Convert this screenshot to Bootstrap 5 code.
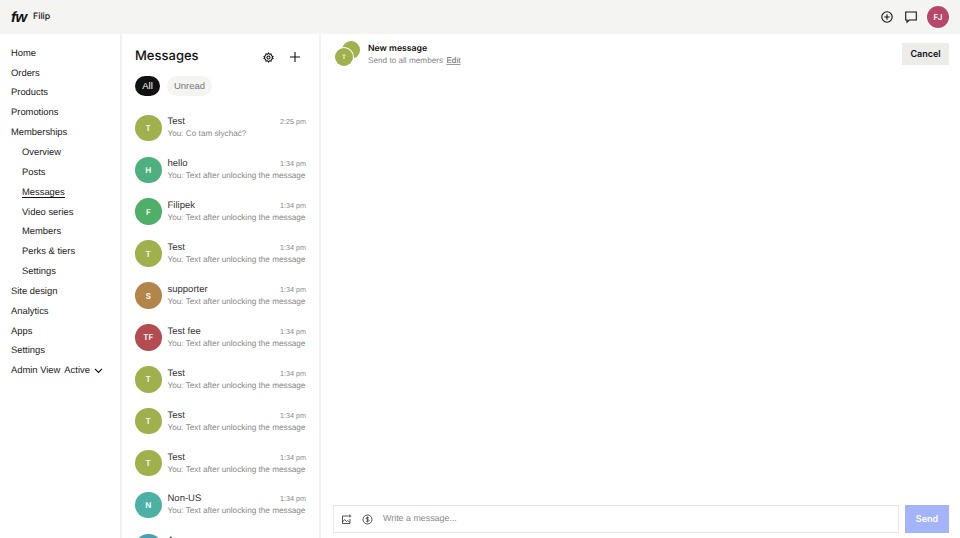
<!DOCTYPE html>
<html lang="en"><head><meta charset="utf-8">
<title>Messages</title>
<link href="https://cdn.jsdelivr.net/npm/bootstrap@5.3.0/dist/css/bootstrap.min.css" rel="stylesheet">
<style>
html,body{height:100%;overflow:hidden}
body{font-family:"Liberation Sans",Arial,sans-serif;color:#111;background:#fff;font-size:9.5px;text-rendering:geometricPrecision}
.shell{height:538px}
.topbar{height:34px;background:#f4f4f3;padding:0 11px}
.logo-mark{font-family:"Liberation Sans",sans-serif;font-style:italic;font-weight:700;font-size:15px;line-height:1;width:22px;letter-spacing:-.4px}
.site-name{font-family:Inter,sans-serif;font-size:8.8px;font-weight:500}
.top-icon{width:16px;height:16px;display:block}
.me{width:22px;height:22px;border-radius:50%;background:#b8456a;color:#fff;font-family:Inter,sans-serif;font-size:8px;font-weight:600;box-shadow:0 0 0 1px #fff}
.body-row{height:504px}
.side{width:122px;flex:none;border-right:2px solid #f1f1f0;padding:8.8px 0 0 11px}
.side-item{display:block;height:19.85px;line-height:19.85px;font-size:9.4px;color:#222;text-decoration:none;white-space:nowrap}
.side-sub{padding-left:11px}
.side-current span{display:inline-block;line-height:10.5px;border-bottom:1.5px solid #111}
.list-pane{width:199px;flex:none;border-right:2px solid #f1f1f0;overflow:hidden;padding:0 13px}
.pane-title{height:42px;padding-top:4px}
.pane-title h1{font-family:Inter,sans-serif;font-size:13px;font-weight:500;margin:0}
.chip{height:20px;line-height:20px;padding:0;border-radius:10px;font-size:9.5px;border:0}
.chip-on{background:#111;color:#fff;width:25px}
.chip-off{background:#f4f4f3;color:#777;width:45px}
.chips{margin-bottom:11px;height:20px;gap:7px}
.thread{height:41.9px}
.ava{width:26.5px;height:26.5px;border-radius:50%;color:#fff;font-family:Inter,sans-serif;font-size:8px;font-weight:600;flex:none}
.thread-main{min-width:0;margin-left:6px}
.thread-name{font-size:9.5px;color:#333;line-height:12px}
.thread-time{font-size:7.2px;color:#888;line-height:12px}
.thread-text{font-size:8.2px;color:#888;line-height:11px;white-space:nowrap}
.c-olive{background:#9fb04c}.c-green{background:#4fb07f}.c-leaf{background:#4fae68}.c-tan{background:#b3854a}.c-red{background:#b34c50}.c-teal{background:#4cb0a4}.c-blue{background:#4a9fb0}
.compose{min-width:0}
.compose-head{padding:9px 11px 0 14px}
.stack{width:25px;height:27px;position:relative;flex:none;margin-top:-2px;margin-right:8px}
.stack .ava{position:absolute;width:18px;height:18px;font-size:6px}
.stack .back{top:0;right:0}
.stack .front{left:0;top:7px;box-shadow:0 0 0 1px #fff}
.nm-title{font-family:Inter,sans-serif;font-size:8.7px;font-weight:600;line-height:12px}
.nm-sub{font-size:8.2px;color:#888;line-height:12px}
.nm-sub a{color:#666;margin-left:1px;text-decoration-color:#999}
.btn-cancel{font-family:Inter,sans-serif;background:#ececeb;border:0;border-radius:0;font-size:9px;font-weight:600;color:#111;height:22px;width:47px;padding:0}
.composer{padding:0 11px 5px 12px;gap:6px}
.msg-box{height:28px;border:1px solid #e6e6e5;padding:0 7px;gap:10px}
.msg-box span{color:#888;font-size:8.9px}
.btn-send{font-family:Inter,sans-serif;background:#a3b4fb;border:0;border-radius:0;color:#fff;font-size:9px;font-weight:600;width:44px;height:28px;padding:0}
.act-plus{margin-left:15.500px;margin-right:5px}
</style></head>
<body>
<div class="shell d-flex flex-column">
  <header class="topbar d-flex align-items-center">
    <span class="logo-mark">fw</span><span class="site-name">Filip</span>
    <div class="ms-auto d-flex align-items-center">
      <svg class="top-icon me-2" viewBox="0 0 16 16" fill="none" stroke="#111" stroke-width="1.1"><circle cx="8" cy="8" r="5.2"/><path d="M8 5.3v5.4M5.3 8h5.4"/></svg>
      <svg class="top-icon" viewBox="0 0 16 16" fill="none" stroke="#111" stroke-width="1.1"><path d="M2.7 3h10.6v8H6.2L4 13.2V11H2.7z"/></svg>
      <div class="me d-flex align-items-center justify-content-center ms-2">FJ</div>
    </div>
  </header>
  <div class="body-row d-flex">
    <nav class="side">
      <a class="side-item" href="#">Home</a><a class="side-item" href="#">Orders</a><a class="side-item" href="#">Products</a><a class="side-item" href="#">Promotions</a><a class="side-item" href="#">Memberships</a>
      <a class="side-item side-sub" href="#">Overview</a><a class="side-item side-sub" href="#">Posts</a><a class="side-item side-sub side-current" href="#"><span>Messages</span></a><a class="side-item side-sub" href="#">Video series</a><a class="side-item side-sub" href="#">Members</a><a class="side-item side-sub" href="#">Perks &amp; tiers</a><a class="side-item side-sub" href="#">Settings</a>
      <a class="side-item" href="#">Site design</a><a class="side-item" href="#">Analytics</a><a class="side-item" href="#">Apps</a><a class="side-item" href="#">Settings</a>
      <a class="side-item d-flex align-items-center" href="#">Admin View<span class="ms-1">Active</span><svg class="ms-1" width="9" height="9" viewBox="0 0 9 9" fill="none" stroke="#111" stroke-width="1.2"><path d="M1 2.8l3.5 3.5L8 2.8"/></svg></a>
    </nav>
    <section class="list-pane">
      <div class="pane-title d-flex align-items-center justify-content-between">
        <h1>Messages</h1>
        <div class="d-flex align-items-center">
          <svg width="11" height="11" viewBox="0 0 12 12" fill="none" stroke="#111" stroke-width="1.1"><path d="M6 1l1 1.500 1.800-.4.4 1.800L11 5l-1 1 1 1-1.800 1.100-.4 1.800L7 9.600 6 11 5 9.600l-1.800.3-.4-1.800L1 7l1-1-1-1 1.800-1.100.4-1.800L5 2.500z"/><circle cx="6" cy="6" r="1.700"/></svg>
          <svg class="act-plus" width="12" height="12" viewBox="0 0 12 12" fill="none" stroke="#111" stroke-width="1.1"><path d="M6 1v10M1 6h10"/></svg>
        </div>
      </div>
      <div class="chips d-flex"><button class="chip chip-on">All</button><button class="chip chip-off">Unread</button></div>
      <div class="thread d-flex align-items-center"><div class="ava c-olive d-flex align-items-center justify-content-center">T</div><div class="thread-main flex-grow-1"><div class="d-flex justify-content-between"><span class="thread-name">Test</span><span class="thread-time">2:25 pm</span></div><div class="thread-text">You: Co tam słychać?</div></div></div>
      <div class="thread d-flex align-items-center"><div class="ava c-green d-flex align-items-center justify-content-center">H</div><div class="thread-main flex-grow-1"><div class="d-flex justify-content-between"><span class="thread-name">hello</span><span class="thread-time">1:34 pm</span></div><div class="thread-text">You: Text after unlocking the message</div></div></div>
      <div class="thread d-flex align-items-center"><div class="ava c-leaf d-flex align-items-center justify-content-center">F</div><div class="thread-main flex-grow-1"><div class="d-flex justify-content-between"><span class="thread-name">Filipek</span><span class="thread-time">1:34 pm</span></div><div class="thread-text">You: Text after unlocking the message</div></div></div>
      <div class="thread d-flex align-items-center"><div class="ava c-olive d-flex align-items-center justify-content-center">T</div><div class="thread-main flex-grow-1"><div class="d-flex justify-content-between"><span class="thread-name">Test</span><span class="thread-time">1:34 pm</span></div><div class="thread-text">You: Text after unlocking the message</div></div></div>
      <div class="thread d-flex align-items-center"><div class="ava c-tan d-flex align-items-center justify-content-center">S</div><div class="thread-main flex-grow-1"><div class="d-flex justify-content-between"><span class="thread-name">supporter</span><span class="thread-time">1:34 pm</span></div><div class="thread-text">You: Text after unlocking the message</div></div></div>
      <div class="thread d-flex align-items-center"><div class="ava c-red d-flex align-items-center justify-content-center">TF</div><div class="thread-main flex-grow-1"><div class="d-flex justify-content-between"><span class="thread-name">Test fee</span><span class="thread-time">1:34 pm</span></div><div class="thread-text">You: Text after unlocking the message</div></div></div>
      <div class="thread d-flex align-items-center"><div class="ava c-olive d-flex align-items-center justify-content-center">T</div><div class="thread-main flex-grow-1"><div class="d-flex justify-content-between"><span class="thread-name">Test</span><span class="thread-time">1:34 pm</span></div><div class="thread-text">You: Text after unlocking the message</div></div></div>
      <div class="thread d-flex align-items-center"><div class="ava c-olive d-flex align-items-center justify-content-center">T</div><div class="thread-main flex-grow-1"><div class="d-flex justify-content-between"><span class="thread-name">Test</span><span class="thread-time">1:34 pm</span></div><div class="thread-text">You: Text after unlocking the message</div></div></div>
      <div class="thread d-flex align-items-center"><div class="ava c-olive d-flex align-items-center justify-content-center">T</div><div class="thread-main flex-grow-1"><div class="d-flex justify-content-between"><span class="thread-name">Test</span><span class="thread-time">1:34 pm</span></div><div class="thread-text">You: Text after unlocking the message</div></div></div>
      <div class="thread d-flex align-items-center"><div class="ava c-teal d-flex align-items-center justify-content-center">N</div><div class="thread-main flex-grow-1"><div class="d-flex justify-content-between"><span class="thread-name">Non-US</span><span class="thread-time">1:34 pm</span></div><div class="thread-text">You: Text after unlocking the message</div></div></div>
      <div class="thread d-flex align-items-center"><div class="ava c-blue d-flex align-items-center justify-content-center">A</div><div class="thread-main flex-grow-1"><div class="d-flex justify-content-between"><span class="thread-name">Anonymous</span><span class="thread-time">1:34 pm</span></div><div class="thread-text">You: Text after unlocking the message</div></div></div>
    </section>
    <main class="compose flex-grow-1 d-flex flex-column">
      <div class="compose-head d-flex align-items-start">
        <div class="stack"><div class="ava back c-olive"></div><div class="ava front c-olive d-flex align-items-center justify-content-center">T</div></div>
        <div class="flex-grow-1"><div class="nm-title">New message</div><div class="nm-sub">Send to all members <a href="#">Edit</a></div></div>
        <button class="btn-cancel">Cancel</button>
      </div>
      <div class="composer mt-auto d-flex align-items-center">
        <div class="msg-box flex-grow-1 d-flex align-items-center">
          <svg width="11" height="11" viewBox="0 0 11 11" fill="none" stroke="#555" stroke-width="1"><path d="M7 2H1.500v7.500H9V5"/><path d="M1.500 8l2.200-2.500 1.800 2 1-1L9 8.500"/><path d="M8.800.5v3M7.300 2h3"/></svg>
          <svg width="11" height="11" viewBox="0 0 11 11" fill="none" stroke="#555" stroke-width="1"><circle cx="5.500" cy="5.500" r="4.500"/><path d="M7 4c-.3-.7-2.800-1-3 .3-.2 1.300 3.200.9 3 2.300-.2 1.100-2.800 1-3.100.2M5.500 2.500v6"/></svg>
          <span>Write a message...</span>
        </div>
        <button class="btn-send">Send</button>
      </div>
    </main>
  </div>
</div>
<script src="https://cdn.jsdelivr.net/npm/bootstrap@5.3.0/dist/js/bootstrap.bundle.min.js"></script>
</body></html>
